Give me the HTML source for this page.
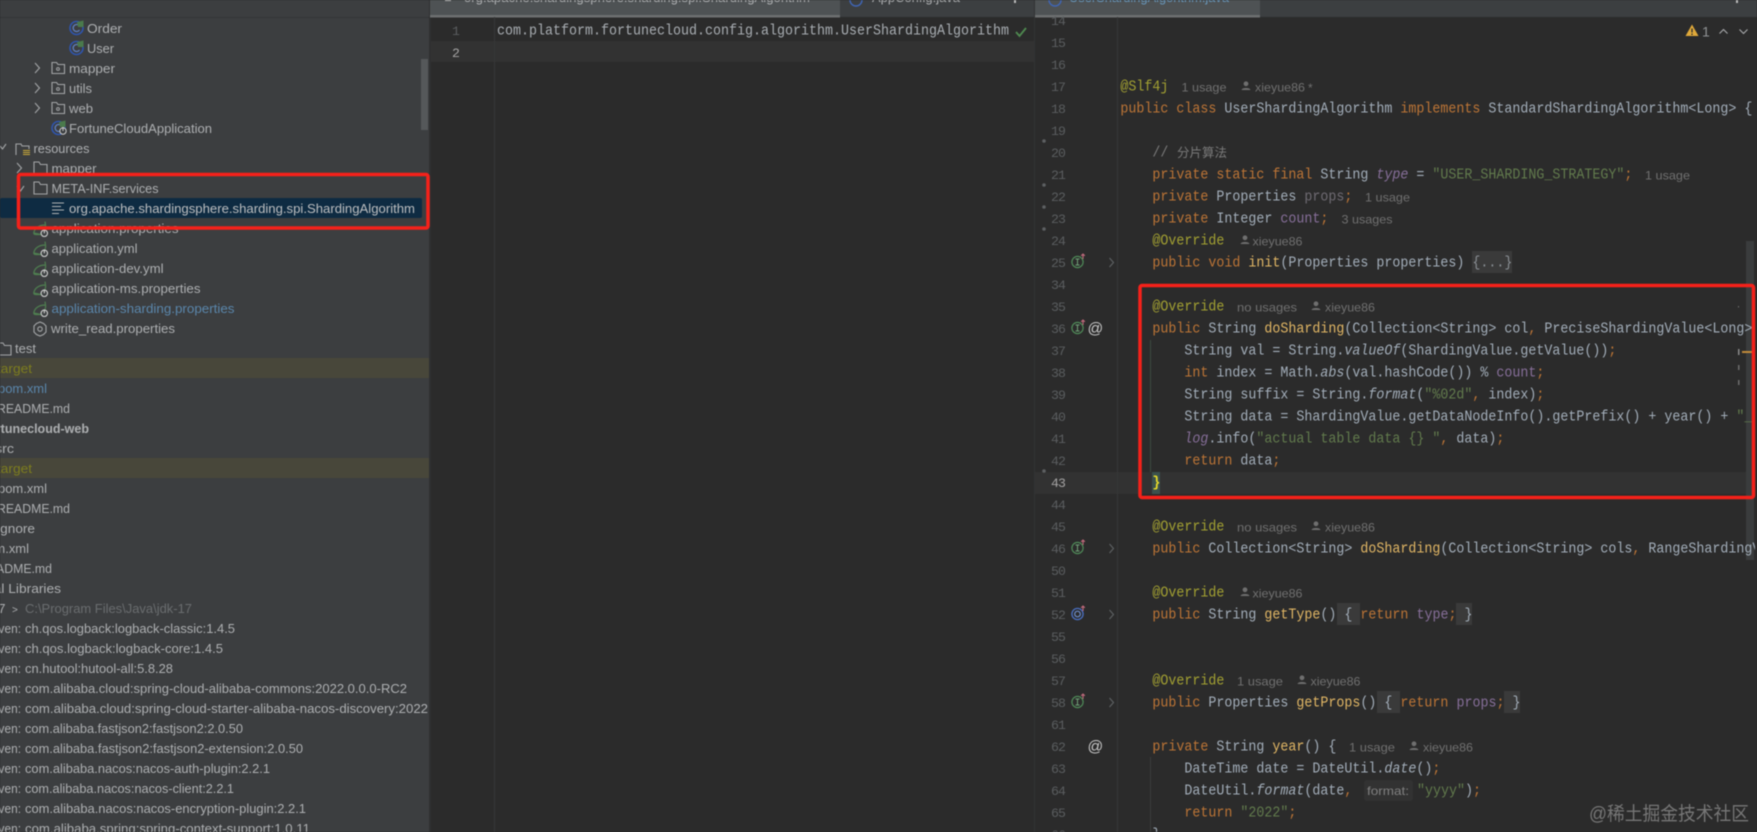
<!DOCTYPE html>
<html><head><meta charset="utf-8"><style>
html,body{margin:0;padding:0;width:1757px;height:832px;overflow:hidden;background:#2b2b2b}
svg{display:block;filter:blur(.45px)}
text{white-space:pre}
.t{font:13px "Liberation Sans",sans-serif;fill:#adafb1}
.m{font:15px "Liberation Mono",monospace;fill:#a3aeba}
.ln{font:13.2px "Liberation Mono",monospace;letter-spacing:-.9px;fill:#5a5d5f}
.h{font:12px "Liberation Sans",sans-serif;fill:#707070}
.k{fill:#bd7536}.a{fill:#a3a132}.s{fill:#627b4d}.f{fill:#876f9a}.y{fill:#e2b765}.c{fill:#7a7a7a}
.i{font-style:italic}
.ic{fill:none;stroke:#a3a5a7;stroke-width:1.1}
</style></head><body>
<svg width="1757" height="832" viewBox="0 0 1757 832" xmlns="http://www.w3.org/2000/svg">
<defs>
<clipPath id="cr"><rect x="1035" y="17" width="720" height="815"/></clipPath>
<clipPath id="tb"><rect x="430" y="0" width="1327" height="15"/></clipPath>
<symbol id="cls" width="16" height="16" viewBox="0 0 16 16" overflow="visible">
<circle cx="7.5" cy="8" r="6.5" fill="none" stroke="#2f55ae" stroke-width="1.6"/>
<path d="M10.5 6a3.500 3.500 0 1 0 0 4" fill="none" stroke="#5f7fc0" stroke-width="1.3"/>
<path d="M8 2 L14.500 .5 L14.500 7 L9 7Z" fill="#4a7a4c"/>
</symbol>
<symbol id="pkg" width="16" height="14" viewBox="0 0 16 14" overflow="visible">
<path class="ic" d="M1 3.500V12.500H13.500V3.500H7L5.500 1.500H1Z"/><circle cx="7" cy="8" r="1.400" fill="none" stroke="#a3a5a7"/>
</symbol>
<symbol id="fld" width="16" height="14" viewBox="0 0 16 14" overflow="visible">
<path class="ic" d="M1 3V13H14V3.500H7.500L6 1H1Z"/>
</symbol>
<symbol id="lf" width="17" height="16" viewBox="0 0 17 16" overflow="visible">
<path d="M.8 12C1.500 7 6 4 12.500 4L12 .6M12.500 4C13 7 12 9 10 10M8 13.500H3C1.500 13.500 .8 13 .8 12Z" fill="none" stroke="#4f7f50" stroke-width="1.200"/>
<circle cx="11.300" cy="12.300" r="3.200" fill="#3c3f41" stroke="#cfcfcf" stroke-width="1.100"/><path d="M11.300 8.500V12.300" stroke="#cfcfcf" stroke-width="1.100"/>
</symbol>
<symbol id="p" width="10" height="10" viewBox="0 0 10 10" overflow="visible">
<circle cx="5" cy="2.800" r="2.400" fill="#6f6f6f"/><path d="M.6 9C.6 6.400 9.400 6.400 9.400 9Z" fill="#6f6f6f"/>
</symbol>
<symbol id="ig" width="16" height="16" viewBox="0 0 16 16" overflow="visible">
<circle cx="6.500" cy="9" r="5.600" fill="none" stroke="#4f8a58" stroke-width="1.200"/>
<path d="M4.500 6H8.500M6.500 6V12M4.500 12H8.500" stroke="#6fa077" fill="none"/>
<path d="M12 6V1M10.200 2.800L12 1 13.800 2.800" stroke="#c06a7c" fill="none" stroke-width="1.100"/>
</symbol>
<symbol id="ib" width="16" height="16" viewBox="0 0 16 16" overflow="visible">
<circle cx="6.500" cy="9" r="5.600" fill="none" stroke="#4a6fc0" stroke-width="1.300"/>
<circle cx="6.500" cy="9" r="2.800" fill="none" stroke="#6d8dcc" stroke-width="1.200"/>
<path d="M12 6V1M10.200 2.800L12 1 13.800 2.800" stroke="#c06a7c" fill="none" stroke-width="1.100"/>
</symbol>
</defs>

<!-- backgrounds -->
<rect width="1757" height="832" fill="#2b2b2b"/>
<rect x="0" y="0" width="430" height="832" fill="#3c3e40"/>
<rect x="0" y="17" width="430" height="1" fill="#333537"/>
<rect x="421" y="59" width="7" height="71" fill="#55585a"/>
<rect x="429" y="0" width="2" height="832" fill="#2f3031"/>

<!-- tree row highlights -->
<rect x="0" y="198" width="422" height="20" rx="2" fill="#0e2b42"/>
<rect x="0" y="358" width="429" height="20" fill="#48473a"/>
<rect x="0" y="458" width="429" height="20" fill="#48473a"/>

<!-- tab bars -->
<rect x="430" y="0" width="1327" height="17" fill="#3c3f41"/>
<rect x="430" y="0" width="410" height="15" fill="#4e5254"/>
<rect x="430" y="15" width="410" height="2.500" fill="#6c6f70"/>
<rect x="1035" y="0" width="225" height="15" fill="#4e5254"/>
<rect x="1035" y="15" width="225" height="2.500" fill="#6c6f70"/>
<rect x="1034" y="0" width="1" height="832" fill="#323334"/>
<g clip-path="url(#tb)">
<text class="t" x="464" y="2" textLength="346" lengthAdjust="spacingAndGlyphs">org.apache.shardingsphere.sharding.spi.ShardingAlgorithm</text>
<text class="t" x="872" y="2" textLength="88" lengthAdjust="spacingAndGlyphs">AppConfig.java</text>
<text class="t" x="1069" y="2" textLength="160" lengthAdjust="spacingAndGlyphs" style="fill:#6897bb">UserShardingAlgorithm.java</text>
<circle cx="856" cy="0" r="6" fill="none" stroke="#3f65b5" stroke-width="1.400"/>
<circle cx="1055" cy="0" r="6" fill="none" stroke="#3f65b5" stroke-width="1.400"/>
<path d="M445 .5H451" stroke="#c0c0c0"/>
<rect x="1014" y="0" width="2" height="3" fill="#bbb"/>
<rect x="1736" y="0" width="2" height="3" fill="#bbb"/>
</g>

<!-- left tree icons -->
<use href="#cls" x="69" y="20"/><use href="#cls" x="69" y="40"/>
<path class="ic" d="M35 63L39.500 68L35 73M35 83L39.500 88L35 93M35 103L39.500 108L35 113"/>
<use href="#pkg" x="51" y="61"/><use href="#pkg" x="51" y="81"/><use href="#pkg" x="51" y="101"/>
<use href="#cls" x="51" y="120"/><circle cx="63" cy="131" r="3.200" fill="#3c3f41" stroke="#ccc"/><path d="M63 127V131" stroke="#ccc"/>
<path class="ic" d="M0 146L2.500 149L6 144"/>
<path class="ic" d="M16 155V144H21L22 146H29V149"/><path d="M23 150.500H30M23 152.500H30M23 154.500H30" stroke="#c9a93a"/>
<path class="ic" d="M17 163L21.500 168L17 173"/><use href="#fld" x="33" y="161"/>
<path class="ic" d="M17 186L20.500 191L24 186"/><use href="#fld" x="33" y="181"/>
<path d="M52 203H64M52 206.500H61M52 210H64M52 213.500H59" stroke="#b0b2b4"/>
<use href="#lf" x="33" y="221"/><use href="#lf" x="33" y="241"/><use href="#lf" x="33" y="261"/><use href="#lf" x="33" y="281"/><use href="#lf" x="33" y="301"/>
<circle cx="40" cy="329" r="2.200" class="ic"/><path class="ic" d="M36.500 323.500L40 322L43.500 323.500L46 326V332L43.500 334.500L40 336L36.500 334.500L34 332V326Z"/>
<use href="#fld" x="-3" y="342"/>

<!-- left tree text -->
<text class="t" x="87" y="33" textLength="35" lengthAdjust="spacingAndGlyphs">Order</text>
<text class="t" x="87" y="53" textLength="27" lengthAdjust="spacingAndGlyphs">User</text>
<text class="t" x="69" y="73" textLength="46" lengthAdjust="spacingAndGlyphs">mapper</text>
<text class="t" x="69" y="93" textLength="23" lengthAdjust="spacingAndGlyphs">utils</text>
<text class="t" x="69" y="113" textLength="24" lengthAdjust="spacingAndGlyphs">web</text>
<text class="t" x="69" y="133" textLength="143" lengthAdjust="spacingAndGlyphs">FortuneCloudApplication</text>
<text class="t" x="33.500" y="153" textLength="56" lengthAdjust="spacingAndGlyphs">resources</text>
<text class="t" x="51.500" y="173" textLength="45" lengthAdjust="spacingAndGlyphs">mapper</text>
<text class="t" x="51.500" y="193" textLength="107" lengthAdjust="spacingAndGlyphs">META-INF.services</text>
<text class="t" x="69" y="213" textLength="346" lengthAdjust="spacingAndGlyphs" style="fill:#bcbec0">org.apache.shardingsphere.sharding.spi.ShardingAlgorithm</text>
<text class="t" x="51.500" y="233" textLength="127" lengthAdjust="spacingAndGlyphs">application.properties</text>
<text class="t" x="51.500" y="253" textLength="86" lengthAdjust="spacingAndGlyphs">application.yml</text>
<text class="t" x="51.500" y="273" textLength="112" lengthAdjust="spacingAndGlyphs">application-dev.yml</text>
<text class="t" x="51.500" y="293" textLength="149" lengthAdjust="spacingAndGlyphs">application-ms.properties</text>
<text class="t" x="51.500" y="313" textLength="183" lengthAdjust="spacingAndGlyphs" style="fill:#5a86ab">application-sharding.properties</text>
<text class="t" x="51" y="333" textLength="124" lengthAdjust="spacingAndGlyphs">write_read.properties</text>
<text class="t" x="15" y="353" textLength="21" lengthAdjust="spacingAndGlyphs">test</text>
<text class="t" x="-3" y="373" textLength="35" lengthAdjust="spacingAndGlyphs" style="fill:#7d7d1e">target</text>
<text class="t" x="-2" y="393" textLength="49" lengthAdjust="spacingAndGlyphs" style="fill:#5a86ab">pom.xml</text>
<text class="t" x="-3" y="413" textLength="73" lengthAdjust="spacingAndGlyphs">README.md</text>
<text class="t" x="-16" y="433" textLength="105" lengthAdjust="spacingAndGlyphs" style="font-weight:bold">fortunecloud-web</text>
<text class="t" x="-5" y="453" textLength="19" lengthAdjust="spacingAndGlyphs">src</text>
<text class="t" x="-3" y="473" textLength="35" lengthAdjust="spacingAndGlyphs" style="fill:#7d7d1e">target</text>
<text class="t" x="-2" y="493" textLength="49" lengthAdjust="spacingAndGlyphs">pom.xml</text>
<text class="t" x="-3" y="513" textLength="73" lengthAdjust="spacingAndGlyphs">README.md</text>
<text class="t" x="-21" y="533" textLength="56" lengthAdjust="spacingAndGlyphs">.gitignore</text>
<text class="t" x="-20" y="553" textLength="49" lengthAdjust="spacingAndGlyphs">pom.xml</text>
<text class="t" x="-21" y="573" textLength="73" lengthAdjust="spacingAndGlyphs">README.md</text>
<text class="t" x="-46" y="593" textLength="107" lengthAdjust="spacingAndGlyphs">External Libraries</text>
<text class="t" x="-9" y="613">17</text><text class="t" x="12" y="613" style="font-size:10px">&gt;</text>
<text class="t" x="25" y="613" textLength="167" lengthAdjust="spacingAndGlyphs" style="fill:#6a6d6f">C:\Program Files\Java\jdk-17</text>
<text class="t" x="-18" y="633" textLength="39" lengthAdjust="spacingAndGlyphs">Maven:</text><text class="t" x="25" y="633" textLength="210" lengthAdjust="spacingAndGlyphs">ch.qos.logback:logback-classic:1.4.5</text>
<text class="t" x="-18" y="653" textLength="39" lengthAdjust="spacingAndGlyphs">Maven:</text><text class="t" x="25" y="653" textLength="198" lengthAdjust="spacingAndGlyphs">ch.qos.logback:logback-core:1.4.5</text>
<text class="t" x="-18" y="673" textLength="39" lengthAdjust="spacingAndGlyphs">Maven:</text><text class="t" x="25" y="673" textLength="148" lengthAdjust="spacingAndGlyphs">cn.hutool:hutool-all:5.8.28</text>
<text class="t" x="-18" y="693" textLength="39" lengthAdjust="spacingAndGlyphs">Maven:</text><text class="t" x="25" y="693" textLength="382" lengthAdjust="spacingAndGlyphs">com.alibaba.cloud:spring-cloud-alibaba-commons:2022.0.0.0-RC2</text>
<text class="t" x="-18" y="713" textLength="39" lengthAdjust="spacingAndGlyphs">Maven:</text><text class="t" x="25" y="713" textLength="403" lengthAdjust="spacingAndGlyphs">com.alibaba.cloud:spring-cloud-starter-alibaba-nacos-discovery:2022</text>
<text class="t" x="-18" y="733" textLength="39" lengthAdjust="spacingAndGlyphs">Maven:</text><text class="t" x="25" y="733" textLength="218" lengthAdjust="spacingAndGlyphs">com.alibaba.fastjson2:fastjson2:2.0.50</text>
<text class="t" x="-18" y="753" textLength="39" lengthAdjust="spacingAndGlyphs">Maven:</text><text class="t" x="25" y="753" textLength="278" lengthAdjust="spacingAndGlyphs">com.alibaba.fastjson2:fastjson2-extension:2.0.50</text>
<text class="t" x="-18" y="773" textLength="39" lengthAdjust="spacingAndGlyphs">Maven:</text><text class="t" x="25" y="773" textLength="245" lengthAdjust="spacingAndGlyphs">com.alibaba.nacos:nacos-auth-plugin:2.2.1</text>
<text class="t" x="-18" y="793" textLength="39" lengthAdjust="spacingAndGlyphs">Maven:</text><text class="t" x="25" y="793" textLength="209" lengthAdjust="spacingAndGlyphs">com.alibaba.nacos:nacos-client:2.2.1</text>
<text class="t" x="-18" y="813" textLength="39" lengthAdjust="spacingAndGlyphs">Maven:</text><text class="t" x="25" y="813" textLength="281" lengthAdjust="spacingAndGlyphs">com.alibaba.nacos:nacos-encryption-plugin:2.2.1</text>
<text class="t" x="-18" y="833" textLength="39" lengthAdjust="spacingAndGlyphs">Maven:</text><text class="t" x="25" y="833" textLength="285" lengthAdjust="spacingAndGlyphs">com.alibaba.spring:spring-context-support:1.0.11</text>

<!-- middle editor -->
<rect x="431" y="41" width="603" height="21" fill="#323232"/>
<rect x="494" y="17" width="1" height="815" fill="#363738"/>
<text class="ln" x="452" y="35">1</text>
<text class="ln" x="452" y="57" style="fill:#a4a3a3">2</text>
<text class="m" transform="translate(497,34.500) scale(.889 1)" style="fill:#a8adb2">com.platform.fortunecloud.config.algorithm.UserShardingAlgorithm</text>
<path d="M1016 32L1019.500 36L1026 28" fill="none" stroke="#4f8a50" stroke-width="1.800"/>

<!-- right editor -->
<rect x="1035" y="472" width="717" height="22" fill="#323232"/>
<rect x="1117" y="17" width="1" height="815" fill="#363738"/>
<!-- folded bg -->
<rect x="1472" y="251" width="40" height="22" fill="#3a3a3a"/>
<rect x="1337" y="603" width="23" height="22" fill="#3a3a3a"/>
<rect x="1456" y="603" width="16" height="22" fill="#3a3a3a"/>
<rect x="1377" y="691" width="23" height="22" fill="#3a3a3a"/>
<rect x="1504" y="691" width="16" height="22" fill="#3a3a3a"/>
<rect x="1364" y="780" width="49" height="21" rx="3" fill="#323232"/>
<!-- guides -->
<rect x="1150" y="340" width="1" height="132" fill="#3c4a40"/>
<rect x="1150" y="757" width="1" height="75" fill="#3b3c3c"/>
<rect x="1152" y="472" width="8" height="22" fill="#3b514d"/>

<!-- scrollbar -->
<rect x="1746" y="241" width="8" height="319" fill="#3a3c3d"/>

<!-- gutter numbers -->
<g transform="translate(0,-.6)">
<text class="ln" x="1051" y="25.600">14</text><text class="ln" x="1051" y="47.600">15</text><text class="ln" x="1051" y="69.600">16</text><text class="ln" x="1051" y="91.600">17</text><text class="ln" x="1051" y="113.600">18</text><text class="ln" x="1051" y="135.600">19</text><text class="ln" x="1051" y="157.600">20</text><text class="ln" x="1051" y="179.600">21</text><text class="ln" x="1051" y="201.600">22</text><text class="ln" x="1051" y="223.600">23</text><text class="ln" x="1051" y="245.600">24</text><text class="ln" x="1051" y="267.600">25</text><text class="ln" x="1051" y="289.600">34</text><text class="ln" x="1051" y="311.600">35</text><text class="ln" x="1051" y="333.600">36</text><text class="ln" x="1051" y="355.600">37</text><text class="ln" x="1051" y="377.600">38</text><text class="ln" x="1051" y="399.600">39</text><text class="ln" x="1051" y="421.600">40</text><text class="ln" x="1051" y="443.600">41</text><text class="ln" x="1051" y="465.600">42</text><text class="ln" x="1051" y="487.600" style="fill:#a4a3a3">43</text><text class="ln" x="1051" y="509.600">44</text><text class="ln" x="1051" y="531.600">45</text><text class="ln" x="1051" y="553.600">46</text><text class="ln" x="1051" y="575.600">50</text><text class="ln" x="1051" y="597.600">51</text><text class="ln" x="1051" y="619.600">52</text><text class="ln" x="1051" y="641.600">55</text><text class="ln" x="1051" y="663.600">56</text><text class="ln" x="1051" y="685.600">57</text><text class="ln" x="1051" y="707.600">58</text><text class="ln" x="1051" y="729.600">61</text><text class="ln" x="1051" y="751.600">62</text><text class="ln" x="1051" y="773.600">63</text><text class="ln" x="1051" y="795.600">64</text><text class="ln" x="1051" y="817.600">65</text><text class="ln" x="1051" y="839.600">66</text>
</g>

<!-- gutter dots -->
<g fill="#5d6062"><circle cx="1044" cy="141" r="1.800"/><circle cx="1044" cy="185" r="1.800"/><circle cx="1044" cy="207" r="1.800"/><circle cx="1044" cy="229" r="1.800"/><circle cx="1044" cy="471" r="1.800"/></g>

<!-- gutter icons -->
<use href="#ig" x="1071" y="253"/><use href="#ig" x="1071" y="319"/><use href="#ig" x="1071" y="539"/>
<use href="#ib" x="1071" y="605"/><use href="#ig" x="1071" y="693"/>
<text x="1087.500" y="333.500" style="font:15.500px 'Liberation Sans',sans-serif;fill:#c8c8c8">@</text>
<text x="1087.500" y="751.500" style="font:15.500px 'Liberation Sans',sans-serif;fill:#c8c8c8">@</text>
<path d="M1109.500 258L1113.500 262.500L1109.500 267M1109.500 544L1113.500 548.500L1109.500 553M1109.500 610L1113.500 614.500L1109.500 619M1109.500 698L1113.500 702.500L1109.500 707" fill="none" stroke="#5f6264" stroke-width="1.100"/>

<!-- code -->
<g clip-path="url(#cr)"><g transform="translate(0,-1)">
<text class="m" transform="translate(1120.400,91.600) scale(.889 1)"><tspan class="a">@Slf4j</tspan></text>
<text class="m" transform="translate(1120.400,113.600) scale(.889 1)"><tspan class="k">public class </tspan>UserShardingAlgorithm<tspan class="k"> implements </tspan>StandardShardingAlgorithm&lt;Long&gt; {</text>
<text class="m" transform="translate(1152.400,157.600) scale(.889 1)" style="fill:#7a7a7a">//</text>
<text x="1177" y="158" style="font:12.500px 'Liberation Sans','Noto Sans CJK SC',sans-serif;fill:#7a7a7a">分片算法</text>
<text class="m" transform="translate(1152.400,179.600) scale(.889 1)"><tspan class="k">private static final </tspan>String <tspan class="f i">type</tspan> = <tspan class="s">"USER_SHARDING_STRATEGY"</tspan><tspan class="k">;</tspan></text>
<text class="m" transform="translate(1152.400,201.600) scale(.889 1)"><tspan class="k">private </tspan>Properties <tspan style="fill:#6f6b73">props</tspan><tspan class="k">;</tspan></text>
<text class="m" transform="translate(1152.400,223.600) scale(.889 1)"><tspan class="k">private </tspan>Integer <tspan class="f">count</tspan><tspan class="k">;</tspan></text>
<text class="m" transform="translate(1152.400,245.600) scale(.889 1)"><tspan class="a">@Override</tspan></text>
<text class="m" transform="translate(1152.400,267.600) scale(.889 1)"><tspan class="k">public void </tspan><tspan class="y">init</tspan>(Properties properties) <tspan style="fill:#8a8f94">{...}</tspan></text>
<text class="m" transform="translate(1152.400,311.600) scale(.889 1)"><tspan class="a">@Override</tspan></text>
<text class="m" transform="translate(1152.400,333.600) scale(.889 1)"><tspan class="k">public </tspan>String <tspan class="y">doSharding</tspan>(Collection&lt;String&gt; col<tspan class="k">, </tspan>PreciseShardingValue&lt;Long&gt; shardingValue) {</text>
<text class="m" transform="translate(1184.400,355.600) scale(.889 1)">String val = String.<tspan class="i">valueOf</tspan>(ShardingValue.getValue())<tspan class="k">;</tspan></text>
<text class="m" transform="translate(1184.400,377.600) scale(.889 1)"><tspan class="k">int </tspan>index = Math.<tspan class="i">abs</tspan>(val.hashCode()) % <tspan class="f">count</tspan><tspan class="k">;</tspan></text>
<text class="m" transform="translate(1184.400,399.600) scale(.889 1)">String suffix = String.<tspan class="i">format</tspan>(<tspan class="s">"%02d"</tspan><tspan class="k">, </tspan>index)<tspan class="k">;</tspan></text>
<text class="m" transform="translate(1184.400,421.600) scale(.889 1)">String data = ShardingValue.getDataNodeInfo().getPrefix() + year() + <tspan class="s">"_"</tspan></text>
<text class="m" transform="translate(1184.400,443.600) scale(.889 1)"><tspan class="f i">log</tspan>.info(<tspan class="s">"actual table data {} "</tspan><tspan class="k">, </tspan>data)<tspan class="k">;</tspan></text>
<text class="m" transform="translate(1184.400,465.600) scale(.889 1)"><tspan class="k">return </tspan>data<tspan class="k">;</tspan></text>
<text class="m" transform="translate(1152.400,487.600) scale(.889 1)" style="fill:#e8db28;font-weight:bold">}</text>
<text class="m" transform="translate(1152.400,531.600) scale(.889 1)"><tspan class="a">@Override</tspan></text>
<text class="m" transform="translate(1152.400,553.600) scale(.889 1)"><tspan class="k">public </tspan>Collection&lt;String&gt; <tspan class="y">doSharding</tspan>(Collection&lt;String&gt; cols<tspan class="k">, </tspan>RangeShardingValue&lt;Long&gt; shardingValue)</text>
<text class="m" transform="translate(1152.400,597.600) scale(.889 1)"><tspan class="a">@Override</tspan></text>
<text class="m" transform="translate(1152.400,619.600) scale(.889 1)"><tspan class="k">public </tspan>String <tspan class="y">getType</tspan>() { <tspan class="k">return </tspan><tspan class="f">type</tspan><tspan class="k">;</tspan> }</text>
<text class="m" transform="translate(1152.400,685.600) scale(.889 1)"><tspan class="a">@Override</tspan></text>
<text class="m" transform="translate(1152.400,707.600) scale(.889 1)"><tspan class="k">public </tspan>Properties <tspan class="y">getProps</tspan>() { <tspan class="k">return </tspan><tspan class="f">props</tspan><tspan class="k">;</tspan> }</text>
<text class="m" transform="translate(1152.400,751.600) scale(.889 1)"><tspan class="k">private </tspan>String <tspan class="y">year</tspan>() {</text>
<text class="m" transform="translate(1184.400,773.600) scale(.889 1)">DateTime date = DateUtil.<tspan class="i">date</tspan>()<tspan class="k">;</tspan></text>
<text class="m" transform="translate(1184.400,795.600) scale(.889 1)">DateUtil.<tspan class="i">format</tspan>(date<tspan class="k">,</tspan></text>
<text class="m" transform="translate(1417,795.600) scale(.889 1)"><tspan class="s">"yyyy"</tspan>)<tspan class="k">;</tspan></text>
<text class="m" transform="translate(1184.400,817.600) scale(.889 1)"><tspan class="k">return </tspan><tspan class="s">"2022"</tspan><tspan class="k">;</tspan></text>
<text class="m" transform="translate(1152.400,839.600) scale(.889 1)">}</text>
</g></g>

<!-- inlay hints -->
<text class="h" x="1181.500" y="91.500" textLength="45" lengthAdjust="spacingAndGlyphs">1 usage</text>
<use href="#p" x="1241" y="81"/><text class="h" x="1255" y="91.500" textLength="50" lengthAdjust="spacingAndGlyphs">xieyue86</text><text class="h" x="1308" y="92">*</text>
<text class="h" x="1645" y="179.500" textLength="45" lengthAdjust="spacingAndGlyphs">1 usage</text>
<text class="h" x="1365" y="201.500" textLength="45" lengthAdjust="spacingAndGlyphs">1 usage</text>
<text class="h" x="1341.500" y="223.500" textLength="51" lengthAdjust="spacingAndGlyphs">3 usages</text>
<use href="#p" x="1240" y="235"/><text class="h" x="1252.500" y="245.500" textLength="50" lengthAdjust="spacingAndGlyphs">xieyue86</text>
<text class="h" x="1237" y="311.500" textLength="60" lengthAdjust="spacingAndGlyphs">no usages</text>
<use href="#p" x="1311" y="301"/><text class="h" x="1325" y="311.500" textLength="50" lengthAdjust="spacingAndGlyphs">xieyue86</text>
<text class="h" x="1237" y="531.500" textLength="60" lengthAdjust="spacingAndGlyphs">no usages</text>
<use href="#p" x="1311" y="521"/><text class="h" x="1325" y="531.500" textLength="50" lengthAdjust="spacingAndGlyphs">xieyue86</text>
<use href="#p" x="1240" y="587"/><text class="h" x="1252.500" y="597.500" textLength="50" lengthAdjust="spacingAndGlyphs">xieyue86</text>
<text class="h" x="1237" y="685.500" textLength="46" lengthAdjust="spacingAndGlyphs">1 usage</text>
<use href="#p" x="1297" y="675"/><text class="h" x="1310.500" y="685.500" textLength="50" lengthAdjust="spacingAndGlyphs">xieyue86</text>
<text class="h" x="1349" y="751.500" textLength="46" lengthAdjust="spacingAndGlyphs">1 usage</text>
<use href="#p" x="1409" y="741"/><text class="h" x="1423" y="751.500" textLength="50" lengthAdjust="spacingAndGlyphs">xieyue86</text>
<text class="h" x="1367" y="795" textLength="42" lengthAdjust="spacingAndGlyphs" style="fill:#808080">format:</text>

<!-- warning / nav -->
<path d="M1692 24.500L1698.500 36H1685.500Z" fill="#e0a93a"/><path d="M1692 28.500V32.500M1692 33.500V35" stroke="#2b2b2b" stroke-width="1.300"/>
<text class="t" x="1702" y="36.500" style="fill:#8f9294;font-size:14px">1</text>
<path d="M1719.500 33.500L1723.500 29.500L1727.500 33.500M1739.500 29.500L1743.500 33.500L1747.500 29.500" fill="none" stroke="#a9abad" stroke-width="1.100"/>

<!-- stripe marks -->
<rect x="1742" y="351" width="13" height="2" fill="#c08a3a"/>
<rect x="1738" y="349" width="1.500" height="6" fill="#8a8a8a"/>
<rect x="1738" y="365" width="1.500" height="5" fill="#6c6c6c"/>
<rect x="1738" y="380" width="1.500" height="5" fill="#6c6c6c"/>
<rect x="1738" y="306" width="1" height="1.500" fill="#6c6c6c"/>

<!-- red annotation boxes -->
<rect x="18.500" y="174.500" width="409.500" height="53.500" rx="2" fill="none" stroke="#f5211a" stroke-width="3.500"/>
<rect x="1140" y="285.500" width="613.500" height="212" rx="2" fill="none" stroke="#f5211a" stroke-width="3.500"/>

<!-- watermark -->
<text x="1589" y="820" textLength="160" lengthAdjust="spacingAndGlyphs" style="font:19px 'Liberation Sans','Noto Sans CJK SC',sans-serif;fill:#767676">@稀土掘金技术社区</text>
</svg>
</body></html>
